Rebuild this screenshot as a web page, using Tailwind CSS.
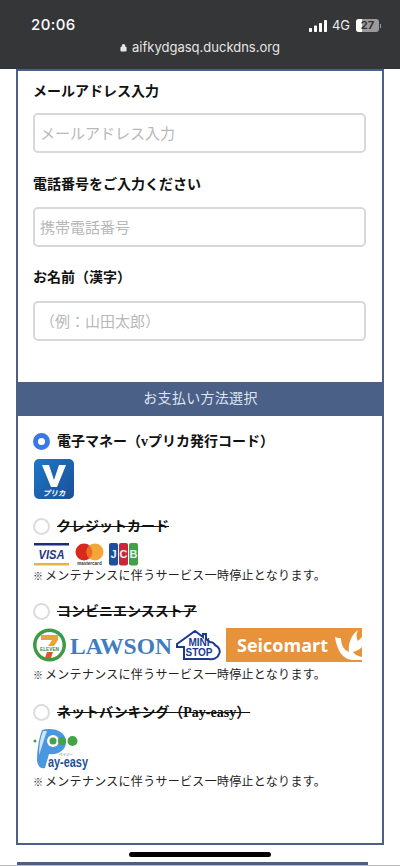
<!DOCTYPE html>
<html lang="ja"><head><meta charset="utf-8"><script src="https://cdn.jsdelivr.net/npm/@tailwindcss/browser@4"></script></head>
<body class="relative w-[400px] h-[866px] overflow-hidden bg-white font-['Liberation_Serif','Noto_Sans_CJK_JP',serif] text-[#111]">
<header class="h-[69px] bg-[#353638] text-white font-['Inter','Liberation_Sans',sans-serif] relative">
  <div class="flex items-center justify-between pl-[31px] pr-[19px] pt-[15px] h-[36px]">
    <span class="text-[15px] font-medium tracking-[0.4px]">20:06</span>
    <div class="flex items-center gap-[5px]">
      <svg width="18" height="12" viewBox="0 0 18 12" fill="#fff"><rect x="0" y="8" width="3" height="4" rx=".7"/><rect x="5" y="5.500" width="3" height="6.500" rx=".7"/><rect x="10" y="3" width="3" height="9" rx=".7"/><rect x="15" y="0" width="3" height="12" rx=".7"/></svg>
      <span class="text-[13px] text-[#ededed]">4G</span>
      <div class="flex items-center ml-[1px]"><div class="relative w-[23px] h-[13px] rounded-[3px] bg-[#9a9a9a] overflow-hidden flex items-center justify-center"><div class="absolute left-0 top-0 bottom-0 w-[6px] bg-white"></div><span class="relative text-[11px] font-bold text-[#333]">27</span></div><div class="w-[1px] h-[4px] bg-[#999] ml-[1px]"></div></div>
    </div>
  </div>
  <div class="flex items-center justify-center gap-[5px] mt-[2px] text-[13px] text-[#e6e6e6]">
    <svg width="7" height="9" viewBox="0 0 8 10" fill="#e6e6e6"><path d="M2 4V3a2 2 0 0 1 4 0v1h.5a1 1 0 0 1 1 1v3.500a1 1 0 0 1-1 1h-5a1 1 0 0 1-1-1V5a1 1 0 0 1 1-1z"/></svg>
    <span>aifkydgasq.duckdns.org</span>
  </div>
</header>
<main class="ml-[16px] w-[368px] h-[776px] border-2 border-[#4a6087]">
  <section class="px-[15px] pt-[11px] h-[311px]">
    <label class="block text-[14px] font-bold leading-[20px]">メールアドレス入力</label>
    <div class="mt-[11px] h-[40px] w-[333px] border-2 border-[#d8d8d8] rounded-[5px] px-[5px] flex items-center text-[15px] text-[#b8b8b8] font-['Noto_Sans_CJK_JP',sans-serif]">メールアドレス入力</div>
    <label class="block mt-[22px] text-[14px] font-bold leading-[20px]">電話番号をご入力ください</label>
    <div class="mt-[12px] h-[40px] w-[333px] border-2 border-[#d8d8d8] rounded-[5px] px-[5px] flex items-center text-[15px] text-[#b8b8b8] font-['Noto_Sans_CJK_JP',sans-serif]">携帯電話番号</div>
    <label class="block mt-[21px] text-[14px] font-bold leading-[20px]">お名前（漢字）</label>
    <div class="mt-[13px] h-[40px] w-[333px] border-2 border-[#d8d8d8] rounded-[5px] px-[5px] flex items-center text-[15px] text-[#b8b8b8] font-['Noto_Sans_CJK_JP',sans-serif]">（例：山田太郎）</div>
  </section>
  <h2 class="-ml-[1px] -mr-[2px] h-[34px] pb-[2px] bg-[#4a6087] text-[#dfe4ec] text-[14px] flex items-center justify-center tracking-[0.3px]">お支払い方法選択</h2>
  <section class="px-[15px] pt-[15px]">
    <div class="flex items-center gap-[7px] h-[20px] text-[14px] font-bold"><span class="w-[17px] h-[17px] rounded-full border-[5px] border-[#3b78e7] bg-white"></span>電子マネー（vプリカ発行コード）</div>
    <svg class="mt-[8px] ml-[1px] block" width="40" height="40" viewBox="0 0 40 40"><defs><linearGradient id="v" x1="0" y1="0" x2="1" y2="1"><stop offset="0" stop-color="#1c78c9"/><stop offset="1" stop-color="#1b4f96"/></linearGradient></defs><rect width="40" height="40" rx="5" fill="url(#v)"/><path d="M8 6h7l5 15 5-15h7l-9 22h-6z" fill="#fff"/><text x="20" y="37" text-anchor="middle" font-size="7.500" font-weight="700" font-style="italic" fill="#fff" font-family="Noto Sans CJK JP">プリカ</text></svg>

    <div class="mt-[17px] flex items-center gap-[7px] h-[20px] text-[14px] font-bold"><span class="w-[17px] h-[17px] rounded-full border-2 border-[#dcdcdc] bg-white"></span><span class="line-through">クレジットカード</span></div>
    <div class="mt-[7px] flex items-start h-[24px]">
      <svg class="ml-[1px]" width="105" height="24" viewBox="0 0 105 24"><rect x="0" y="0" width="35" height="2.500" fill="#1a2f7a"/><rect x="0" y="20" width="35" height="2.500" fill="#e8b440"/><text x="17.500" y="16" text-anchor="middle" font-size="13" font-weight="700" font-style="italic" fill="#24387f" font-family="Liberation Sans" textLength="26" lengthAdjust="spacingAndGlyphs">VISA</text><circle cx="50" cy="9" r="8.500" fill="#d9281e"/><circle cx="61" cy="9" r="8.500" fill="#f3a63a"/><path d="M55.500 2.600a8.500 8.500 0 0 1 0 12.800a8.500 8.500 0 0 1 0-12.800z" fill="#ee6c22"/><text x="55.500" y="22" text-anchor="middle" font-size="4.500" font-weight="700" fill="#333" font-family="Liberation Sans">mastercard</text><rect x="75" y="0" width="9" height="22.500" rx="2" fill="#1d4f9e"/><rect x="85" y="0" width="9" height="22.500" rx="2" fill="#c5283a"/><rect x="95" y="0" width="9" height="22.500" rx="2" fill="#3fa24a"/><g font-family="Liberation Sans" font-weight="700" font-size="11" fill="#e8eef5" text-anchor="middle"><text x="79.500" y="15">J</text><text x="89.500" y="15">C</text><text x="99.500" y="15">B</text></g></svg>
    </div>
    <p class="text-[12px] leading-[18px] text-[#222] tracking-[0.3px] whitespace-nowrap"><span class="inline-block w-[12px] text-[10px] font-bold">※</span>メンテナンスに伴うサービス一時停止となります。</p>

    <div class="mt-[15px] flex items-center gap-[7px] h-[20px] text-[14px] font-bold"><span class="w-[17px] h-[17px] rounded-full border-2 border-[#dcdcdc] bg-white"></span><span class="line-through">コンビニエンスストア</span></div>
    <div class="mt-[7px] flex items-center">
      <svg width="330" height="34" viewBox="0 0 330 34"><circle cx="16.500" cy="17" r="16.500" fill="#3f9a46"/><circle cx="16.500" cy="17" r="13" fill="#fff"/><path d="M8 7h17v5l-4 6h-6l4-6H8z" fill="#e9a33b"/><text x="16.500" y="22.500" text-anchor="middle" font-size="4.500" font-weight="700" fill="#2f8f44" font-family="Liberation Sans" textLength="19" lengthAdjust="spacingAndGlyphs">ELEVEN</text><path d="M14 24h6l-2 6h-6z" fill="#e2532f"/><text x="88" y="26" text-anchor="middle" font-size="24" font-weight="700" fill="#3f7cc0" textLength="102" lengthAdjust="spacingAndGlyphs" font-family="Liberation Serif">LAWSON</text><path d="M144 16L162 3l8 6V6h3v5l4 3c2 0 4 1 5 3c4 2 6 6 4 9c-1 4-6 6-10 5h-25V19h-7z" fill="#fff" stroke="#1a3a8f" stroke-width="2"/><text x="166" y="18" text-anchor="middle" font-size="10" font-weight="700" fill="#1a3a8f" font-family="Liberation Sans">MINI</text><text x="166" y="28" text-anchor="middle" font-size="10" font-weight="700" fill="#1a3a8f" font-family="Liberation Sans">STOP</text><rect x="193" y="0" width="136" height="34" fill="#e8923a"/><text x="204" y="23.500" font-size="17.500" font-weight="700" fill="#fff" textLength="91" lengthAdjust="spacingAndGlyphs" font-family="Open Sans">Seicomart</text><path d="M302 9c2 1 4 1 6 1c0 7 3 12 8 14c-1-7 1-16 9-22c-2 4-2 8 0 11l4-4v10c-3 3-6 4-9 5c2 3 5 4 9 5v3h-10c-9-1-15-9-17-23z" fill="#fff"/></svg>
    </div>
    <p class="mt-[4px] text-[12px] leading-[18px] text-[#222] tracking-[0.3px] whitespace-nowrap"><span class="inline-block w-[12px] text-[10px] font-bold">※</span>メンテナンスに伴うサービス一時停止となります。</p>

    <div class="mt-[17px] flex items-center gap-[7px] h-[20px] text-[14px] font-bold"><span class="w-[17px] h-[17px] rounded-full border-2 border-[#dcdcdc] bg-white"></span><span class="line-through">ネットバンキング（Pay-easy）</span></div>
    <div class="mt-[6px] h-[44px]">
      <svg width="60" height="44" viewBox="0 0 60 44"><path d="M9 2C20-1 33 3 33 14C33 23 24 27 16 26L12 40C7 41 5 38 4 33C4 22 6 10 9 2z" fill="#4a97df"/><path d="M10 3c-3 7-4 15-4 24c3-8 5-16 8-24z" fill="#cfe4f7"/><circle cx="20" cy="13" r="6" fill="#fff"/><circle cx="20" cy="13" r="3.500" fill="#43a34a"/><circle cx="29" cy="13" r="4" fill="#43a34a"/><circle cx="39.500" cy="13" r="5" fill="#43a34a"/><circle cx="2" cy="13" r="1.500" fill="#43a34a"/><text x="15" y="39" font-size="14" font-weight="700" fill="#1d4f95" textLength="40" lengthAdjust="spacingAndGlyphs" font-family="Liberation Sans">ay-easy</text><text x="26" y="28" font-size="3.500" fill="#1d4f95" font-family="Noto Sans CJK JP">ペイジー</text></svg>
    </div>
    <p class="mt-[1px] text-[12px] leading-[18px] text-[#222] tracking-[0.3px] whitespace-nowrap"><span class="inline-block w-[12px] text-[10px] font-bold">※</span>メンテナンスに伴うサービス一時停止となります。</p>
  </section>
</main>
<div class="absolute left-[129px] top-[852px] w-[142px] h-[5px] rounded-full bg-black"></div>
<div class="mt-[17px] ml-[17px] w-[351px] h-[5px] bg-[#4a6087]"></div>
<div class="absolute left-0 right-0 bottom-0 h-[1px] bg-[#bdbdbd]"></div>
</body></html>
